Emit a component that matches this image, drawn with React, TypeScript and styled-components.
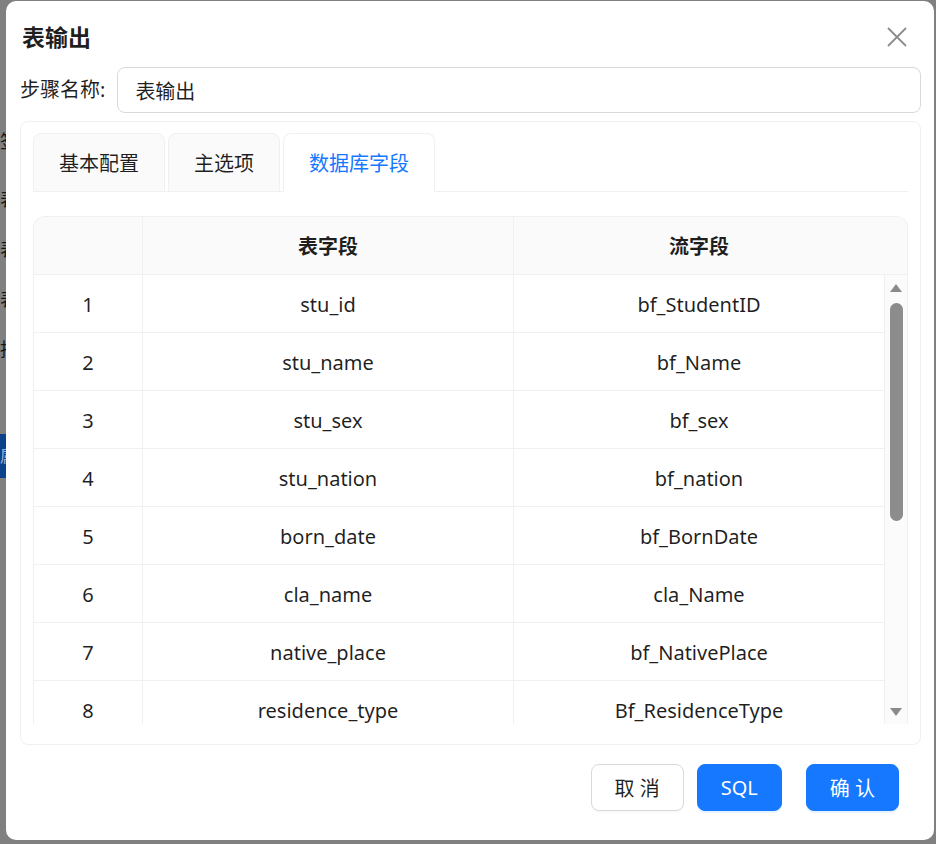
import React from "react";
import styled, { createGlobalStyle } from "styled-components";

const GlobalStyle = createGlobalStyle`
  html, body { margin: 0; padding: 0; }
  body {
    font-family: "Noto Sans", "Noto Sans CJK SC", sans-serif;
    color: rgba(0, 0, 0, 0.88);
  }
  * { box-sizing: border-box; }
`;

const Page = styled.div`
  position: relative;
  width: 936px;
  height: 844px;
  overflow: hidden;
  background: #808080;
`;

const SideMenu = styled.div`
  display: flex;
  flex-direction: column;
  padding-top: 130px;
  width: 60px;
`;

const SideItem = styled.div<{ $gap: number }>`
  font-size: 18px;
  line-height: 22px;
  color: #161616;
  margin-top: ${(p) => p.$gap}px;
  white-space: nowrap;
`;

const SideActive = styled.div`
  margin-top: 74px;
  height: 44px;
  width: 60px;
  background: #0c418c;
  color: #9fb3d4;
  font-size: 16px;
  line-height: 44px;
`;

const Modal = styled.div`
  position: absolute;
  left: 6px;
  top: 1px;
  width: 928px;
  height: 839px;
  background: #ffffff;
  border-radius: 10px;
  padding: 0 13px 0 14px;
  display: flex;
  flex-direction: column;
`;

const Header = styled.div`
  display: flex;
  align-items: center;
  justify-content: space-between;
  padding-top: 20px;
  height: 52px;
`;

const Title = styled.div`
  font-size: 23px;
  font-weight: 700;
  line-height: 32px;
  padding-left: 2px;
  color: rgba(0, 0, 0, 0.88);
`;

const CloseButton = styled.button`
  width: 20px;
  height: 20px;
  padding: 0;
  border: none;
  background: transparent;
  margin-right: 14px;
  display: flex;
  cursor: pointer;
`;

const FormRow = styled.div`
  display: flex;
  align-items: center;
  margin-top: 14px;
  gap: 12px;
`;

const Label = styled.label`
  font-size: 20px;
  line-height: 28px;
  white-space: nowrap;
`;

const Input = styled.input`
  flex: 1;
  height: 46px;
  border: 1px solid #d9d9d9;
  border-radius: 8px;
  padding: 0 17px;
  font-size: 20px;
  font-family: "Noto Sans", "Noto Sans CJK SC", sans-serif;
  color: rgba(0, 0, 0, 0.88);
  outline: none;
`;

const Card = styled.div`
  margin-top: 8px;
  height: 624px;
  border: 1px solid #f0f0f0;
  border-radius: 8px;
  padding: 11px 12px 0;
  display: flex;
  flex-direction: column;
`;

const TabBar = styled.div`
  display: flex;
  gap: 3px;
  border-bottom: 1px solid #f0f0f0;
  height: 59px;
`;

const Tab = styled.div<{ $active?: boolean }>`
  height: 59px;
  padding: 0 25px;
  display: flex;
  align-items: center;
  font-size: 20px;
  border: 1px solid #f0f0f0;
  border-bottom-color: ${(p) => (p.$active ? "#ffffff" : "#f0f0f0")};
  border-radius: 8px 8px 0 0;
  background: ${(p) => (p.$active ? "#ffffff" : "#fafafa")};
  color: ${(p) => (p.$active ? "#1677ff" : "rgba(0,0,0,0.88)")};
  white-space: nowrap;
`;

const Table = styled.div`
  margin-top: 24px;
  border: 1px solid #f0f0f0;
  border-bottom: none;
  border-radius: 12px 12px 0 0;
  display: flex;
  flex-direction: column;
`;

const HeadRow = styled.div`
  display: grid;
  grid-template-columns: 109px 371px 1fr;
  height: 58px;
  background: #fafafa;
  border-bottom: 1px solid #f0f0f0;
  border-radius: 12px 12px 0 0;
`;

const HeadCell = styled.div<{ $divider?: boolean }>`
  display: flex;
  align-items: center;
  justify-content: center;
  font-size: 20px;
  font-weight: 700;
  padding-right: ${(p) => (p.$divider ? 0 : 23)}px;
  border-right: ${(p) => (p.$divider ? "1px solid #f0f0f0" : "none")};
`;

const Body = styled.div`
  display: flex;
  height: 449px;
`;

const Rows = styled.div`
  flex: 1;
  overflow: hidden;
`;

const Row = styled.div`
  display: grid;
  grid-template-columns: 109px 371px 1fr;
  height: 58px;
  border-bottom: 1px solid #f0f0f0;
`;

const Cell = styled.div`
  display: flex;
  align-items: center;
  justify-content: center;
  padding-top: 2px;
  font-size: 20px;
  border-right: 1px solid #f0f0f0;
  white-space: nowrap;
`;

const Scrollbar = styled.div`
  width: 22px;
  background: #fbfbfb;
  display: flex;
  flex-direction: column;
  align-items: center;
  padding-top: 9px;
`;

const Arrow = styled.div<{ $down?: boolean }>`
  width: 0;
  height: 0;
  border-left: 6px solid transparent;
  border-right: 6px solid transparent;
  ${(p) =>
    p.$down
      ? "border-top: 8px solid #8a8a8a; margin-top: auto; margin-bottom: 8px;"
      : "border-bottom: 8px solid #8a8a8a;"}
`;

const Thumb = styled.div`
  margin-top: 11px;
  width: 13px;
  height: 218px;
  border-radius: 7px;
  background: #8c8c8c;
`;

const Footer = styled.div`
  margin-top: 19px;
  display: flex;
  justify-content: flex-end;
  padding-right: 22px;
`;

const Button = styled.button<{ $primary?: boolean; $gap?: number }>`
  height: 47px;
  padding: 0 23px;
  margin-left: ${(p) => p.$gap ?? 0}px;
  border-radius: 8px;
  font-size: 20px;
  font-family: "Noto Sans", "Noto Sans CJK SC", sans-serif;
  border: 1px solid ${(p) => (p.$primary ? "#1677ff" : "#d9d9d9")};
  background: ${(p) => (p.$primary ? "#1677ff" : "#ffffff")};
  color: ${(p) => (p.$primary ? "#ffffff" : "rgba(0,0,0,0.88)")};
  box-shadow: ${(p) =>
    p.$primary ? "0 2px 0 rgba(5,145,255,0.1)" : "0 2px 0 rgba(0,0,0,0.02)"};
  white-space: pre;
  cursor: pointer;
`;

const rows = [
  ["stu_id", "bf_StudentID"],
  ["stu_name", "bf_Name"],
  ["stu_sex", "bf_sex"],
  ["stu_nation", "bf_nation"],
  ["born_date", "bf_BornDate"],
  ["cla_name", "cla_Name"],
  ["native_place", "bf_NativePlace"],
  ["residence_type", "Bf_ResidenceType"],
];

export default function App() {
  return (
    <Page>
      <GlobalStyle />
      <SideMenu>
        <SideItem $gap={0}>签名</SideItem>
        <SideItem $gap={36}>表输入</SideItem>
        <SideItem $gap={28}>表输出</SideItem>
        <SideItem $gap={28}>表更新</SideItem>
        <SideItem $gap={28}>抽取</SideItem>
        <SideActive>属性</SideActive>
      </SideMenu>
      <Modal>
        <Header>
          <Title>表输出</Title>
          <CloseButton aria-label="close">
            <svg width="20" height="20" viewBox="0 0 20 20">
              <path
                d="M1 1 L19 19 M19 1 L1 19"
                stroke="#8c8c8c"
                strokeWidth="1.8"
                fill="none"
              />
            </svg>
          </CloseButton>
        </Header>
        <FormRow>
          <Label>步骤名称:</Label>
          <Input defaultValue="表输出" />
        </FormRow>
        <Card>
          <TabBar>
            <Tab>基本配置</Tab>
            <Tab>主选项</Tab>
            <Tab $active>数据库字段</Tab>
          </TabBar>
          <Table>
            <HeadRow>
              <HeadCell $divider />
              <HeadCell $divider>表字段</HeadCell>
              <HeadCell>流字段</HeadCell>
            </HeadRow>
            <Body>
              <Rows>
                {rows.map(([a, b], i) => (
                  <Row key={a}>
                    <Cell>{i + 1}</Cell>
                    <Cell>{a}</Cell>
                    <Cell>{b}</Cell>
                  </Row>
                ))}
              </Rows>
              <Scrollbar>
                <Arrow />
                <Thumb />
                <Arrow $down />
              </Scrollbar>
            </Body>
          </Table>
        </Card>
        <Footer>
          <Button>取 消</Button>
          <Button $primary $gap={13}>
            SQL
          </Button>
          <Button $primary $gap={24}>
            确 认
          </Button>
        </Footer>
      </Modal>
    </Page>
  );
}
